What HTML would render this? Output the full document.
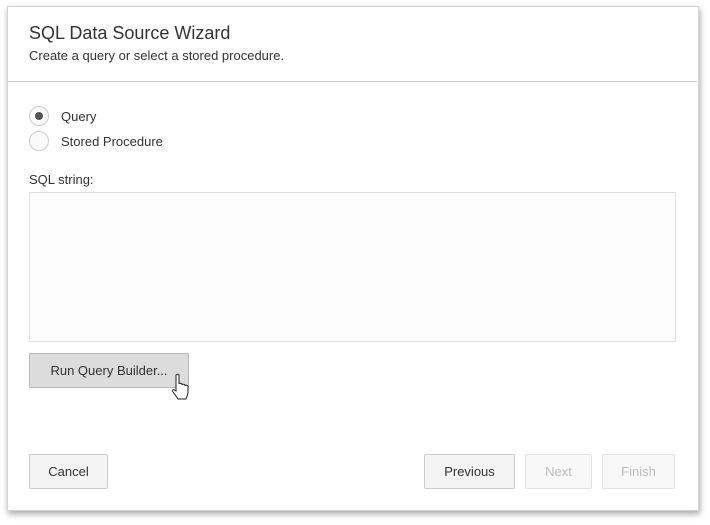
<!DOCTYPE html>
<html><head><style>
body{margin:0;width:710px;height:525px;background:#fff;font-family:"Liberation Sans",sans-serif;position:relative;overflow:hidden;color:#333}
.dlg{position:absolute;left:7px;top:6px;width:690px;height:503px;background:#fff;border:1px solid #d4d4d4;box-shadow:1px 3px 6px rgba(0,0,0,.35)}
.a{position:absolute;white-space:nowrap}
.btn{position:absolute;box-sizing:border-box;border:1px solid #ccc;border-radius:2px;background:#f4f4f4;font-size:13px;text-align:center;color:#333}
.r{position:absolute;width:20px;height:20px;border:1px solid #ccc;border-radius:50%;background:#fafafa;box-sizing:border-box}
</style></head><body>
<div class="dlg"></div>
<div class="a" style="left:29px;top:23px;font-size:18px;color:#333">SQL Data Source Wizard</div>
<div class="a" style="left:29px;top:48px;font-size:13px;color:#333">Create a query or select a stored procedure.</div>
<div class="a" style="left:8px;top:81px;width:689px;height:1px;background:#d0d0d0"></div>
<div class="r" style="left:29px;top:106px"><div style="position:absolute;left:5px;top:5px;width:8px;height:8px;border-radius:50%;background:#555"></div></div>
<div class="a" style="left:61px;top:109px;font-size:13px">Query</div>
<div class="r" style="left:29px;top:131px"></div>
<div class="a" style="left:61px;top:134px;font-size:13px">Stored Procedure</div>
<div class="a" style="left:29px;top:172px;font-size:13px">SQL string:</div>
<div class="a" style="left:29px;top:192px;width:645px;height:148px;border:1px solid #e0e0e0;background:#fcfcfc"></div>
<div class="btn" style="left:29px;top:353px;width:160px;height:35px;line-height:34px;background:#dcdcdc;border-color:#b8b8b8">Run Query Builder...</div>
<svg class="a" style="left:170px;top:373px" width="22" height="30" viewBox="0 0 22 30"><path d="M6 2c1-1 2.5-1 3 0v9c0-1 2.5-1 3 0v1c0-1 2.5-1 3 0v1c0-1 2.5-1 3 0v6c0 3-1.5 5-2 7H8c-1-2-3-4-5-7-1-1.5 0-3 1.5-2L6 18z" fill="#fff" stroke="#222" stroke-width="1"/></svg>
<div class="btn" style="left:29px;top:454px;width:79px;height:35px;line-height:34px">Cancel</div>
<div class="btn" style="left:424px;top:454px;width:91px;height:35px;line-height:34px">Previous</div>
<div class="btn" style="left:525px;top:454px;width:67px;height:35px;line-height:34px;color:#bbb;background:#f8f8f8;border-color:#e2e2e2">Next</div>
<div class="btn" style="left:602px;top:454px;width:73px;height:35px;line-height:34px;color:#bbb;background:#f8f8f8;border-color:#e2e2e2">Finish</div>
</body></html>
